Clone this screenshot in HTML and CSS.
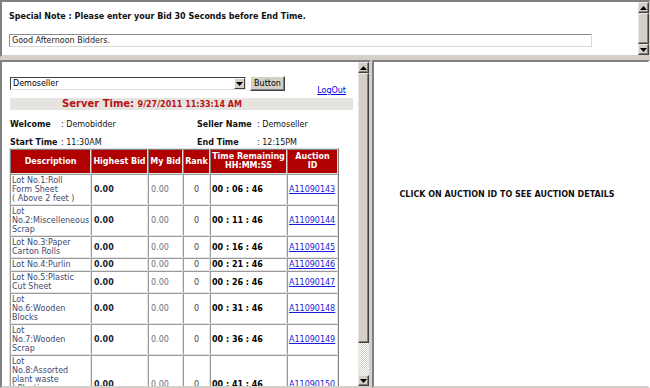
FILE: index.html
```html
<html lang="en">
<head>
    <meta charset="UTF-8">
    <title>Online Auction</title>
    <link rel="stylesheet" href="styles.css">
</head>
<body>
<div class="frames">
    <div class="frame top">
        <div class="pane note-pane">
            <p class="note">Special Note : Please enter your Bid 30 Seconds before End Time.</p>
            <div class="msgbox">Good Afternoon Bidders.</div>
        </div>
        <div class="vscroll">
            <div class="sbtn"><svg width="7" height="4" viewBox="0 0 7 4"><path d="M3.5 0L7 4H0z" fill="#000"/></svg></div>
            <div class="thumb"></div>
            <div class="sbtn"><svg width="7" height="4" viewBox="0 0 7 4"><path d="M0 0H7L3.5 4z" fill="#000"/></svg></div>
        </div>
    </div>

    <div class="lower">
        <div class="frame left">
            <div class="pane bid-pane">
                <div class="toolbar">
                    <div class="select">
                        <span class="select-text">Demoseller</span>
                        <span class="select-btn"><svg width="7" height="4" viewBox="0 0 7 4"><path d="M0 0H7L3.5 4z" fill="#000"/></svg></span>
                    </div>
                    <div class="button">Button</div>
                    <a href="#" class="logout">LogOut</a>
                </div>

                <div class="server-time">Server Time: <span class="date">9/27/2011 11:33:14 AM</span></div>

                <div class="info">
                    <b>Welcome</b><span>: Demobidder</span>
                    <b>Seller Name</b><span>: Demoseller</span>
                    <b>Start Time</b><span>: 11:30AM</span>
                    <b>End Time</b><span>: 12:15PM</span>
                </div>

                <table class="bids">
                    <colgroup>
                        <col style="width:81px">
                        <col style="width:57px">
                        <col style="width:35px">
                        <col style="width:27px">
                        <col style="width:77px">
                        <col style="width:51px">
                    </colgroup>
                    <tr>
                        <th>Description</th>
                        <th>Highest Bid</th>
                        <th>My Bid</th>
                        <th>Rank</th>
                        <th>Time Remaining<br>HH:MM:SS</th>
                        <th>Auction<br>ID</th>
                    </tr>
                    <tr>
                        <td class="desc">Lot No.1:Roll<br>Form Sheet<br>( Above 2 feet )</td>
                        <td class="high">0.00</td><td class="mine">0.00</td><td class="rank">0</td>
                        <td class="left-time">00 : 06 : 46</td><td class="id"><a href="#">A11090143</a></td>
                    </tr>
                    <tr>
                        <td class="desc">Lot<br>No.2:Miscelleneous<br>Scrap</td>
                        <td class="high">0.00</td><td class="mine">0.00</td><td class="rank">0</td>
                        <td class="left-time">00 : 11 : 46</td><td class="id"><a href="#">A11090144</a></td>
                    </tr>
                    <tr>
                        <td class="desc">Lot No.3:Paper<br>Carton Rolls</td>
                        <td class="high">0.00</td><td class="mine">0.00</td><td class="rank">0</td>
                        <td class="left-time">00 : 16 : 46</td><td class="id"><a href="#">A11090145</a></td>
                    </tr>
                    <tr>
                        <td class="desc">Lot No.4:Purlin</td>
                        <td class="high">0.00</td><td class="mine">0.00</td><td class="rank">0</td>
                        <td class="left-time">00 : 21 : 46</td><td class="id"><a href="#">A11090146</a></td>
                    </tr>
                    <tr>
                        <td class="desc">Lot No.5:Plastic<br>Cut Sheet</td>
                        <td class="high">0.00</td><td class="mine">0.00</td><td class="rank">0</td>
                        <td class="left-time">00 : 26 : 46</td><td class="id"><a href="#">A11090147</a></td>
                    </tr>
                    <tr>
                        <td class="desc">Lot<br>No.6:Wooden<br>Blocks</td>
                        <td class="high">0.00</td><td class="mine">0.00</td><td class="rank">0</td>
                        <td class="left-time">00 : 31 : 46</td><td class="id"><a href="#">A11090148</a></td>
                    </tr>
                    <tr>
                        <td class="desc">Lot<br>No.7:Wooden<br>Scrap</td>
                        <td class="high">0.00</td><td class="mine">0.00</td><td class="rank">0</td>
                        <td class="left-time">00 : 36 : 46</td><td class="id"><a href="#">A11090149</a></td>
                    </tr>
                    <tr>
                        <td class="desc">Lot<br>No.8:Assorted<br>plant waste<br>( Plastic,<br>Wood and<br>Paper )</td>
                        <td class="high">0.00</td><td class="mine">0.00</td><td class="rank">0</td>
                        <td class="left-time">00 : 41 : 46</td><td class="id"><a href="#">A11090150</a></td>
                    </tr>
                </table>
            </div>
            <div class="vscroll">
                <div class="sbtn"><svg width="7" height="4" viewBox="0 0 7 4"><path d="M3.5 0L7 4H0z" fill="#000"/></svg></div>
                <div class="thumb long"></div>
                <div class="track"></div>
                <div class="sbtn"><svg width="7" height="4" viewBox="0 0 7 4"><path d="M0 0H7L3.5 4z" fill="#000"/></svg></div>
            </div>
        </div>

        <div class="frame right">
            <p class="hint">CLICK ON AUCTION ID TO SEE AUCTION DETAILS</p>
        </div>
    </div>
</div>
</body>
</html>
```

FILE: styles.css
```css
* {
    margin: 0;
    padding: 0;
}

body {
    background: #d4d0c8;
    font-family: "DejaVu Sans", Verdana, sans-serif;
    font-size: 8px;
    color: #000;
    overflow: hidden;
}

.frames {
    width: 650px;
    height: 388px;
    display: flex;
    flex-direction: column;
}

.frame {
    display: flex;
    background: #fff;
    border: 2px solid;
    border-color: #808080 #d4d0c8 #d4d0c8 #808080;
    overflow: hidden;
    box-sizing: border-box;
}

.pane {
    flex: 1;
    overflow: hidden;
}

/* top frame */
.top {
    height: 57px;
    border-right-width: 1px;
}

.note-pane {
    padding: 10px 0 0 7px;
}

.note {
    font-weight: bold;
    font-size: 8px;
    line-height: 10px;
    color: #111;
}

.msgbox {
    margin-top: 12px;
    width: 583px;
    height: 13px;
    box-sizing: border-box;
    border: 1px solid;
    border-color: #8c8c8c #d8d8d8 #d8d8d8 #8c8c8c;
    padding-left: 2px;
    line-height: 11px;
    color: #222;
}

/* scrollbars */
.vscroll {
    width: 11px;
    display: flex;
    flex-direction: column;
    background: repeating-conic-gradient(#d4d0c8 0 25%, #fff 0 50%) 0 0 / 2px 2px;
}

.sbtn, .thumb {
    box-sizing: border-box;
    background: #d4d0c8;
    border: 1px solid;
    border-color: #e8e6e2 #404040 #404040 #e8e6e2;
    box-shadow: inset -1px -1px 0 #808080;
}

.sbtn {
    height: 11px;
    display: flex;
    align-items: center;
    justify-content: center;
}

.thumb {
    flex: 1;
}

.thumb.long {
    flex: none;
    height: 270px;
}

.track {
    flex: 1;
}

/* lower frames */
.lower {
    flex: 1;
    display: flex;
    gap: 1px;
    margin-top: 3px;
    min-height: 0;
}

.left {
    width: 371px;
}

.right {
    flex: 1;
    justify-content: center;
    border-right-color: #fff;
}

.hint {
    font-weight: bold;
    font-size: 8px;
    color: #111;
    padding-top: 128px;
    margin-left: -8px;
}

.bid-pane {
    padding: 0 0 0 6px;
}

.toolbar {
    display: flex;
    align-items: flex-start;
    padding: 14px 12px 0 2px;
}

.select {
    width: 236px;
    height: 13px;
    box-sizing: border-box;
    display: flex;
    border: 1px solid;
    border-color: #404040 #e0e0e0 #e0e0e0 #404040;
    margin-top: 1px;
}

.select-text {
    flex: 1;
    line-height: 11px;
    padding-left: 2px;
}

.select-btn {
    width: 11px;
    box-sizing: border-box;
    background: #d4d0c8;
    border: 1px solid;
    border-color: #fff #404040 #404040 #fff;
    display: flex;
    align-items: center;
    justify-content: center;
}

.button {
    margin-left: 4px;
    width: 35px;
    height: 15px;
    box-sizing: border-box;
    background: #d4d0c8;
    border: 1px solid;
    border-color: #fff #404040 #404040 #fff;
    box-shadow: inset -1px -1px 0 #808080;
    text-align: center;
    line-height: 13px;
}

.logout {
    margin-left: auto;
    margin-top: 10px;
    color: #0000ee;
}

.server-time {
    margin: 3px 5px 0 2px;
    height: 12px;
    background: #e6e4e0;
    color: #b8141a;
    font-weight: bold;
    font-size: 10px;
    line-height: 12px;
    padding-left: 52px;
}

.server-time .date {
    font-size: 8px;
}

.info {
    display: grid;
    grid-template-columns: 51px 136px 60px 1fr;
    row-gap: 8px;
    margin: 10px 0 0 2px;
    line-height: 10px;
    color: #111;
}

.bids {
    margin: 0 0 0 1px;
    width: 330px;
    table-layout: fixed;
    border: 1px solid;
    border-color: #e0e0e0 #808080 #808080 #e0e0e0;
    border-spacing: 0;
    font-size: 8px;
    line-height: 9px;
}

.bids th {
    background: #b00000;
    color: #fff;
    font-weight: bold;
    border: 1px solid;
    border-color: #808080 #e0e0e0 #e0e0e0 #808080;
    padding: 2px 1px 3px;
    white-space: nowrap;
}

.bids td {
    border: 1px solid;
    border-color: #9a9a9a #e4e4e4 #e4e4e4 #9a9a9a;
    padding: 1px;
    white-space: nowrap;
}

.bids .desc {
    color: #3b4a70;
}

.bids .high {
    font-weight: bold;
    color: #1c2330;
    padding-left: 2px;
}

.bids .mine {
    color: #6a7080;
    padding-left: 2px;
}

.bids .rank {
    text-align: center;
    color: #444;
}

.bids .left-time {
    font-weight: bold;
}

.bids .id {
    padding-left: 1px;
}

.bids .id a {
    color: #1a1ad8;
}
```
